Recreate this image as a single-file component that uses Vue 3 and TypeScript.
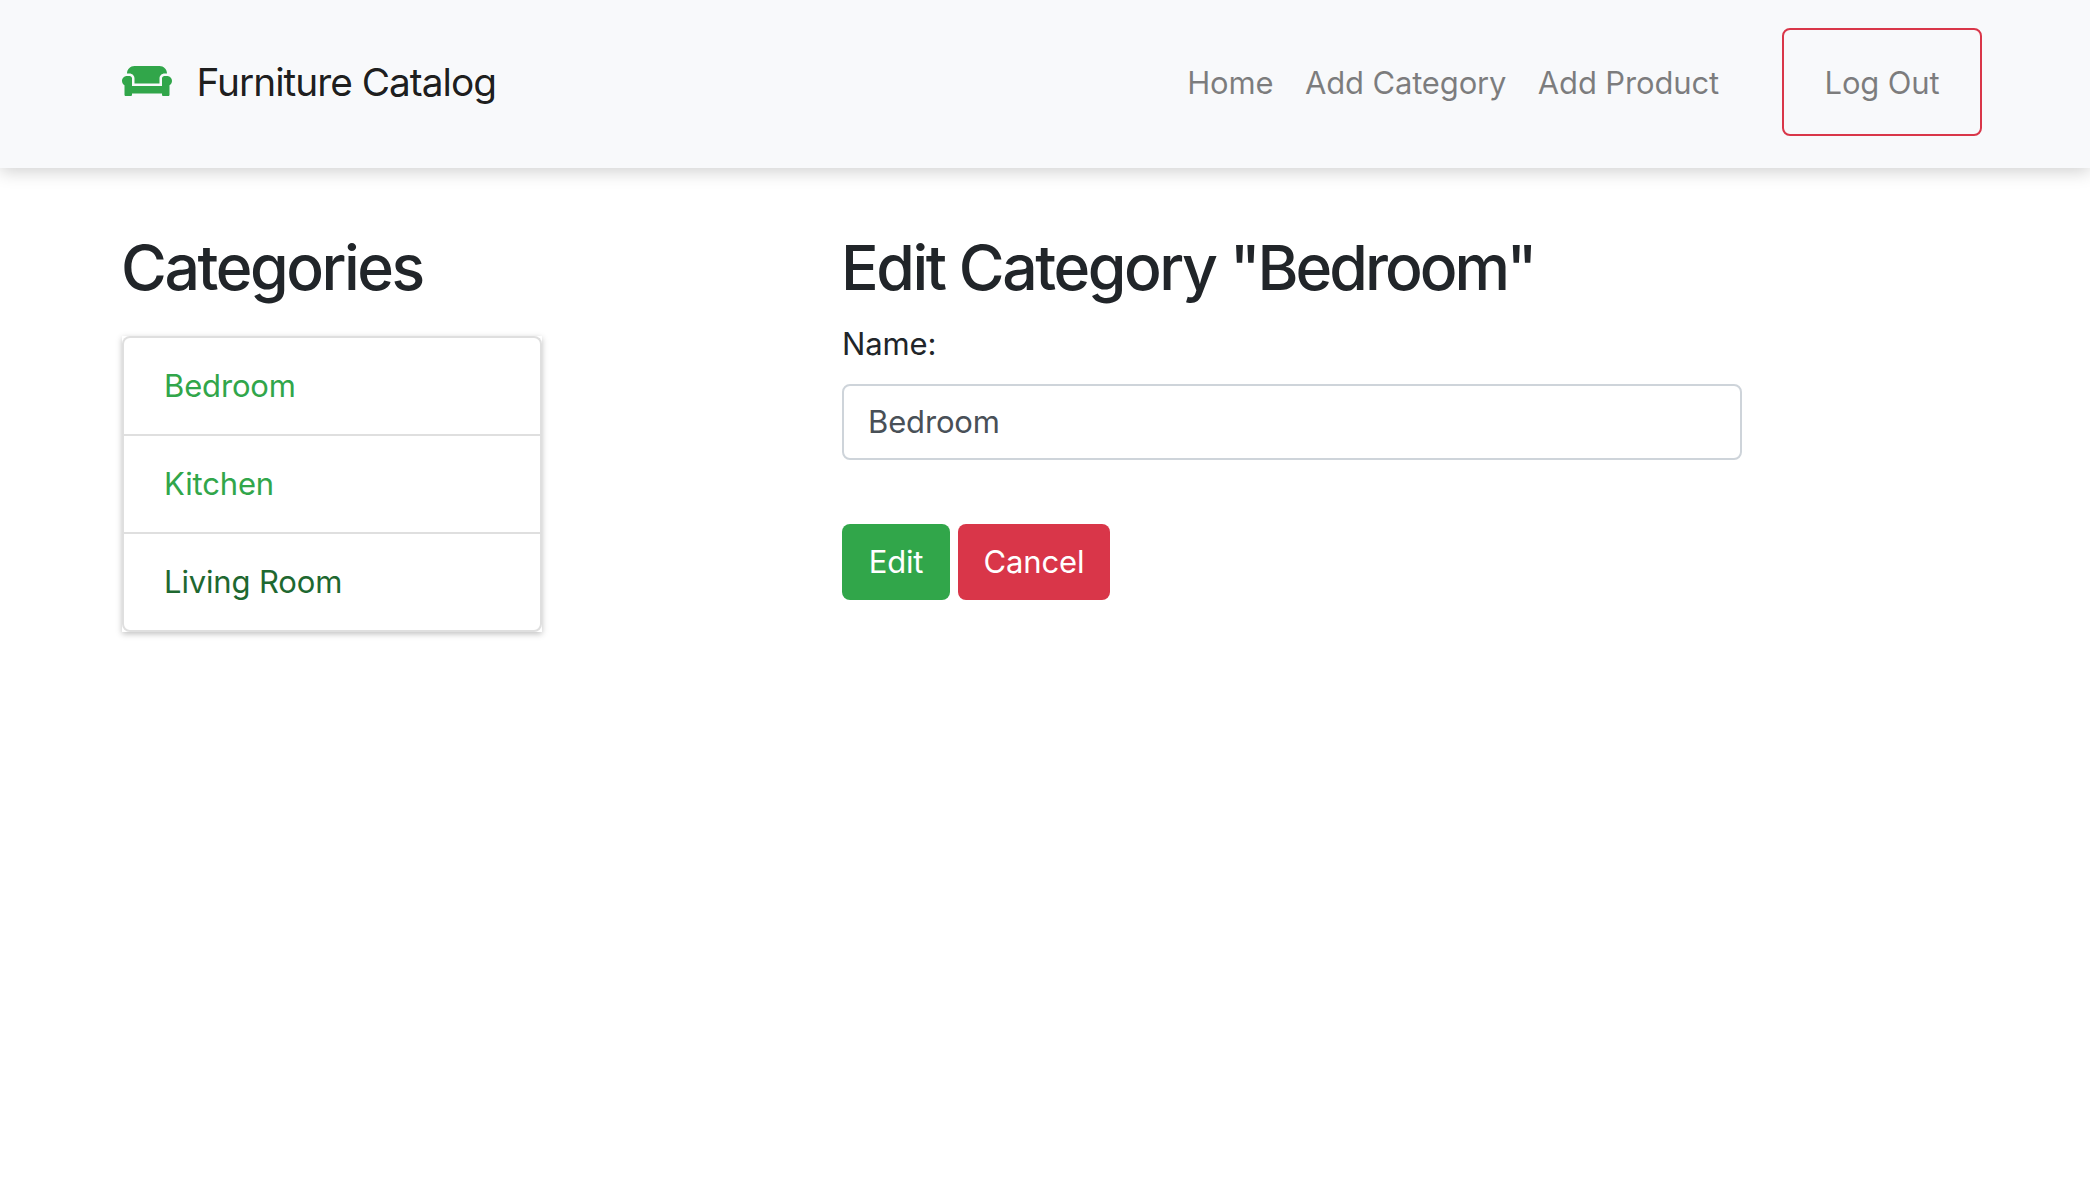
<script setup lang="ts">
import { ref } from 'vue'

interface Category {
  name: string
  active?: boolean
}

const navLinks: string[] = ['Home', 'Add Category', 'Add Product']
const categories: Category[] = [
  { name: 'Bedroom' },
  { name: 'Kitchen' },
  { name: 'Living Room', active: true },
]
const name = ref('Bedroom')
</script>

<template>
  <div class="page">
    <header class="navbar">
      <a class="brand">
        <svg class="couch" viewBox="0 0 640 512" aria-hidden="true">
          <path
            fill="currentColor"
            d="M160 224v64h320v-64c0-35.3 28.7-64 64-64h32c0-53-43-96-96-96H160c-53 0-96 43-96 96h32c35.3 0 64 28.7 64 64zm416-32h-32c-17.7 0-32 14.3-32 32v96H128v-96c0-17.7-14.3-32-32-32H64c-35.3 0-64 28.7-64 64 0 23.6 13 44 32 55.1V432c0 8.8 7.2 16 16 16h64c8.8 0 16-7.2 16-16v-16h384v16c0 8.8 7.2 16 16 16h64c8.8 0 16-7.2 16-16V311.1c19-11 32-31.5 32-55.1 0-35.3-28.7-64-64-64z"
          />
        </svg>
        <span>Furniture Catalog</span>
      </a>
      <nav class="links">
        <a v-for="link in navLinks" :key="link" class="nav-link">{{ link }}</a>
        <a class="logout">Log Out</a>
      </nav>
    </header>

    <main class="content">
      <aside class="sidebar">
        <h1>Categories</h1>
        <ul class="list">
          <li v-for="c in categories" :key="c.name">
            <a :class="{ active: c.active }">{{ c.name }}</a>
          </li>
        </ul>
      </aside>

      <section class="editor">
        <h1>Edit Category <span class="quoted">"Bedroom"</span></h1>
        <label for="name">Name:</label>
        <input id="name" v-model="name" type="text" />
        <div class="actions">
          <button class="btn edit" type="button">Edit</button>
          <button class="btn cancel" type="button">Cancel</button>
        </div>
      </section>
    </main>
  </div>
</template>

<style>
body {
  background: #fff;
}
</style>

<style scoped>
.page,
.page * {
  box-sizing: border-box;
}
.page {
  min-height: 1200px;
  font-family: Inter, 'Liberation Sans', sans-serif;
  font-size: 31px;
  font-weight: 440;
  line-height: 48px;
  letter-spacing: -0.15px;
  color: #212529;
  white-space: nowrap;
}
.navbar {
  display: flex;
  justify-content: space-between;
  align-items: flex-start;
  height: 168px;
  padding: 28px 108px 0 122px;
  background: #f8f9fb;
  box-shadow: 0 4px 16px rgba(0, 0, 0, 0.18);
}
.brand {
  display: flex;
  align-items: center;
  height: 108px;
  gap: 24.5px;
  font-size: 38.8px;
  letter-spacing: -1px;
  color: rgba(0, 0, 0, 0.9);
}
.couch {
  width: 50px;
  height: 40px;
  margin-top: -2px;
  color: #31a64a;
}
.links {
  display: flex;
  align-items: center;
  height: 108px;
  color: rgba(0, 0, 0, 0.5);
}
.nav-link {
  margin-right: 31.5px;
  padding-top: 1px;
}
.logout {
  display: flex;
  align-items: center;
  justify-content: center;
  width: 200px;
  height: 108px;
  margin-left: 31.5px;
  padding-top: 1px;
  border: 2px solid #d93649;
  border-radius: 8px;
}
.content {
  display: flex;
  padding: 61px 122px 0;
}
.sidebar {
  width: 420px;
  margin-right: 300px;
}
h1 {
  margin: 0 0 0 -1px;
  height: 76px;
  line-height: 76px;
  font-size: 62.5px;
  font-weight: 540;
  letter-spacing: -2.45px;
}
.quoted {
  letter-spacing: -3px;
}
.list {
  margin: 31px 0 0;
  padding: 0;
  list-style: none;
  background: #fff;
  box-shadow: 0 2px 6px rgba(0, 0, 0, 0.25);
}
.list li {
  height: 98px;
  padding: 24px 40px 0;
  border: 2px solid #dfdfdf;
  border-bottom: 0;
}
.list li:first-child {
  border-radius: 8px 8px 0 0;
}
.list li:last-child {
  height: 100px;
  border-bottom: 2px solid #dfdfdf;
  border-radius: 0 0 8px 8px;
}
.list a {
  color: #31a64a;
}
.list a.active {
  color: #1e6830;
}
.editor {
  display: flex;
  flex-direction: column;
  width: 900px;
}
label {
  margin-top: 15px;
  height: 48px;
}
input {
  width: 900px;
  height: 76px;
  margin-top: 16px;
  padding: 0 24px 1px;
  border: 2px solid #ced4da;
  border-radius: 8px;
  outline: none;
  background: #fff;
  font: inherit;
  letter-spacing: inherit;
  color: #495057;
}
.actions {
  display: flex;
  gap: 8px;
  margin-top: 64px;
}
.btn {
  height: 76px;
  padding: 0;
  border: 0;
  border-radius: 8px;
  font: inherit;
  letter-spacing: inherit;
  color: #fff;
}
.edit {
  width: 108px;
  background: #31a64a;
}
.cancel {
  width: 152px;
  background: #d93649;
}
</style>
